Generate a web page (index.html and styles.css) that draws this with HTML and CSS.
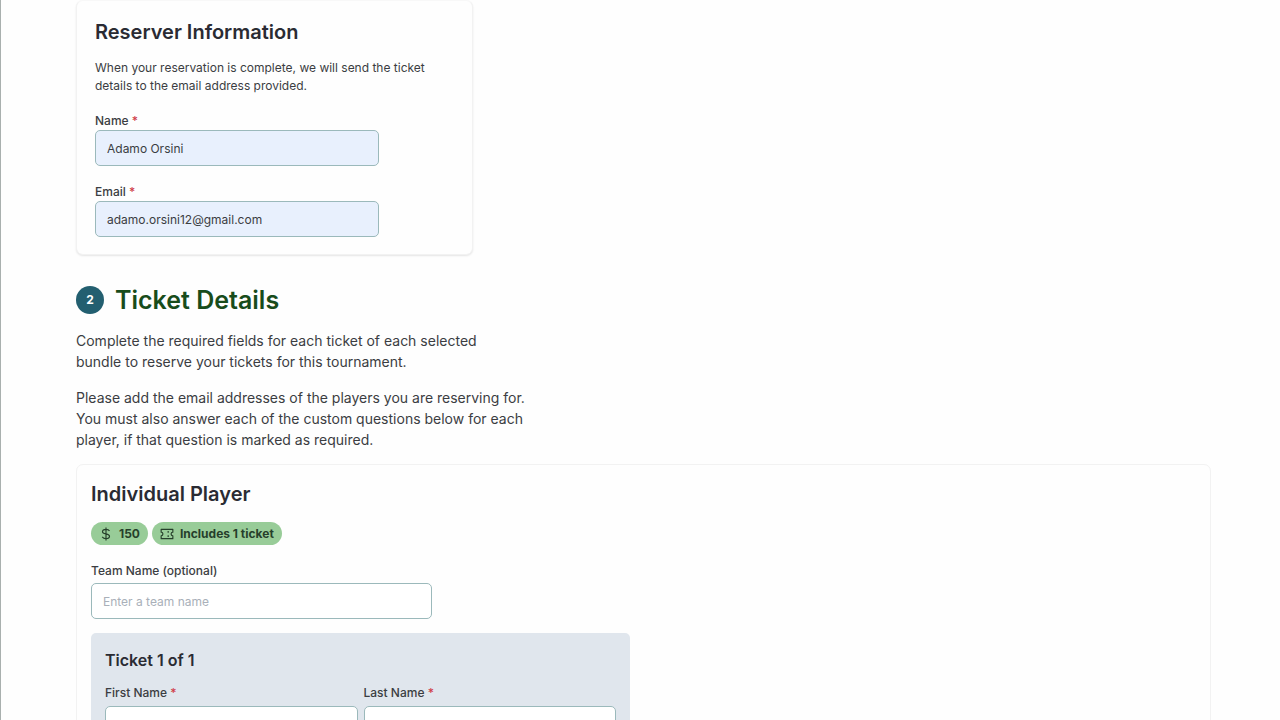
FILE: index.html
```html
<!DOCTYPE html>
<html lang="en">
<head>
    <meta charset="UTF-8">
    <meta name="viewport" content="width=device-width, initial-scale=1.0">
    <title>Reserve Tickets</title>
    <link rel="stylesheet" href="styles.css">
</head>
<body>
    <main>
        <section class="card reserver">
            <h2>Reserver Information</h2>
            <p class="note">When your reservation is complete, we will send the ticket details to the email address provided.</p>

            <div class="field">
                <label for="name">Name <span class="required">*</span></label>
                <input type="text" id="name" class="filled" value="Adamo Orsini" required>
            </div>
            <div class="field">
                <label for="email">Email <span class="required">*</span></label>
                <input type="email" id="email" class="filled" value="adamo.orsini12@gmail.com" required>
            </div>
        </section>

        <div class="step">
            <span class="step-number">2</span>
            <h1>Ticket Details</h1>
        </div>
        <div class="intro">
            <p>Complete the required fields for each ticket of each selected bundle to reserve your tickets for this tournament.</p>
            <p>Please add the email addresses of the players you are reserving for. You must also answer each of the custom questions below for each player, if that question is marked as required.</p>
        </div>

        <section class="card bundle">
            <h2>Individual Player</h2>
            <div class="badges">
                <span class="badge">
                    <svg width="14" height="14" viewBox="0 0 24 24"><path d="M12 1v22M18 7C17 5 15 4 12 4c-3.500 0-6 1.500-6 4 0 5.200 12 2.500 12 8 0 2.500-2.500 4-6 4-3 0-5-1-6.500-3"/></svg>
                    150
                </span>
                <span class="badge">
                    <svg width="14" height="14" viewBox="0 0 24 24"><path d="M2 4h20v5a3 3 0 0 0 0 6v5H2v-5a3 3 0 0 0 0-6zM14 7v3M14 14v3"/></svg>
                    Includes 1 ticket
                </span>
            </div>

            <div class="field team">
                <label for="team">Team Name (optional)</label>
                <input type="text" id="team" placeholder="Enter a team name">
            </div>

            <div class="ticket">
                <h3>Ticket 1 of 1</h3>
                <div class="row">
                    <div class="field">
                        <label for="firstName">First Name <span class="required">*</span></label>
                        <input type="text" id="firstName" required>
                    </div>
                    <div class="field">
                        <label for="lastName">Last Name <span class="required">*</span></label>
                        <input type="text" id="lastName" required>
                    </div>
                </div>
            </div>
        </section>
    </main>
</body>
</html>
```

FILE: styles.css
```css
* {
    box-sizing: border-box;
}

body {
    margin: 0;
    min-height: 100vh;
    border-left: 1px solid #a9b0ae;
    background-color: #fefefe;
    color: #3b3d42;
    font-family: Inter, "Liberation Sans", sans-serif;
    font-size: 14px;
    line-height: 21px;
}

main {
    padding: 0 69px 0 75px;
}

h1, h2, h3, p {
    margin: 0;
}

h1 {
    color: #184c1b;
    font-size: 25px;
    font-weight: 600;
    line-height: 32px;
}

h2 {
    color: #2a2b33;
    font-size: 20px;
    font-weight: 600;
    line-height: 26px;
}

h3 {
    color: #2a2b33;
    font-size: 16px;
    font-weight: 600;
    line-height: 20px;
}

.card {
    border: 1px solid #f2f2f2;
    border-radius: 7px;
    background-color: #fefefe;
}

.reserver {
    max-width: 397px;
    padding: 18px 18px 17px;
    border-top-color: #f8f8f8;
    box-shadow: 0 1px 2px rgba(0, 0, 0, 0.1);
}

.note {
    margin: 14px 0 17px;
    font-size: 12px;
    line-height: 18px;
}

.field {
    display: flex;
    flex-direction: column;
}

.field + .field {
    margin-top: 17px;
}

.reserver .field {
    max-width: 284px;
}

label {
    font-size: 12px;
    font-weight: 500;
    line-height: 18px;
}

.required {
    color: #d0404a;
}

input {
    width: 100%;
    height: 36px;
    padding: 0 11px;
    border: 1px solid #9bb9bb;
    border-radius: 5px;
    background-color: #fff;
    color: #3b3d42;
    font-family: inherit;
    font-size: 12px;
}

input.filled {
    background-color: #e8f0fd;
}

input::placeholder {
    color: #a9b0b9;
}

.step {
    display: flex;
    align-items: center;
    gap: 11px;
    margin-top: 29px;
}

.step-number {
    width: 28px;
    border-radius: 50%;
    background-color: #235f70;
    color: #fff;
    font-size: 12px;
    font-weight: 700;
    line-height: 28px;
    text-align: center;
}

.intro {
    max-width: 449px;
    margin-top: 14px;
}

.intro p + p {
    margin-top: 15px;
}

.bundle {
    margin-top: 14px;
    padding: 16px 14px;
}

.badges {
    display: flex;
    gap: 4px;
    margin-top: 15px;
}

.badge {
    display: flex;
    align-items: center;
    gap: 6px;
    padding: 0 8px;
    border-radius: 12px;
    background-color: #98cc98;
    color: #263f2b;
    font-size: 12px;
    font-weight: 700;
    line-height: 23px;
}

.badge svg {
    fill: none;
    stroke: currentColor;
    stroke-width: 2;
    stroke-linejoin: round;
}

.team {
    max-width: 341px;
    margin-top: 17px;
    gap: 3px;
}

.ticket {
    max-width: 539px;
    margin-top: 14px;
    padding: 17px 14px;
    border-radius: 5px;
    background-color: #e0e6ed;
}

.row {
    display: grid;
    grid-template-columns: 1fr 1fr;
    gap: 6px;
    margin-top: 14px;
}

.row .field {
    margin-top: 0;
    gap: 4px;
}
```
